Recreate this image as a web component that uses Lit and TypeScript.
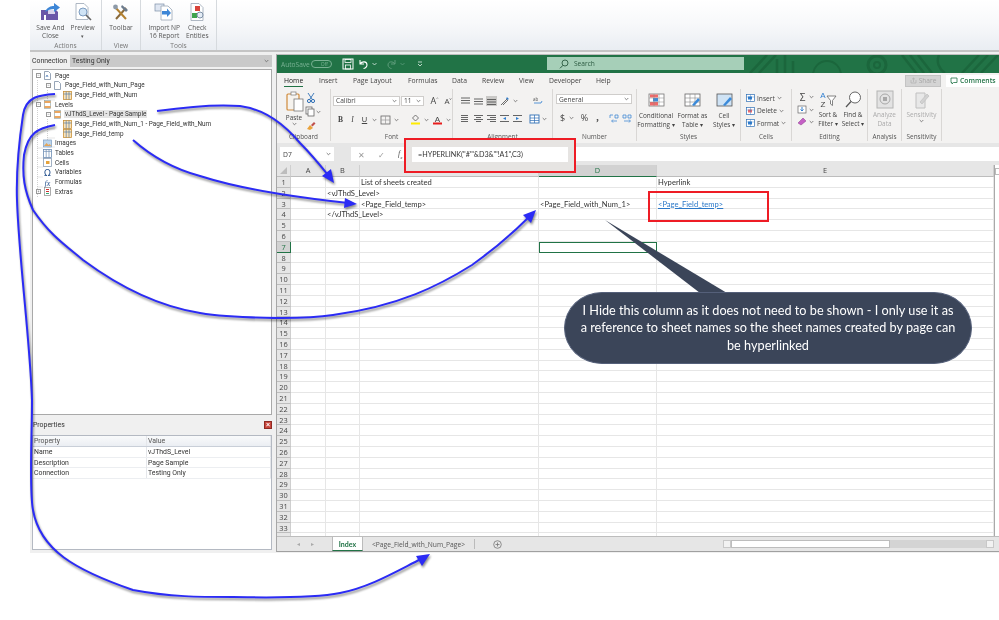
import { LitElement, html, css, svg } from "lit";
import { customElement } from "lit/decorators.js";

const ic = (w: number, h: number, body: unknown) =>
  html`<svg class="ico" width=${w} height=${h} viewBox="0 0 ${w} ${h}">${body}</svg>`;
const caret = () => html`<svg class="caret" width="5" height="4" viewBox="0 0 5 4"><path d="M.7 1l1.8 1.8L4.3 1" fill="none" stroke="#666" stroke-width=".8"/></svg>`;

const tableIc = svg`<rect x=".5" y=".5" width="8" height="8" fill="#fbe3b8" stroke="#c9913a" stroke-width=".8"/><path d="M.5 3h8M3.2 .5v8M6 .5v8" stroke="#5a7fa8" stroke-width=".7"/>`;
const docIc = svg`<path d="M1.5 .5h4l2 2v6h-6z" fill="#fff" stroke="#7d8fa6" stroke-width=".8"/>`;
const levelIc = svg`<rect x="1.5" y=".5" width="6" height="8" fill="#fff" stroke="#9aa" stroke-width=".7"/><path d="M1.5 2h6M1.5 7h6" stroke="#e58a2e" stroke-width="1.6"/>`;
const treeIcons: Record<string, unknown> = {
  page: svg`${docIc}<path d="M3 6l1-2 1 2" stroke="#3a6fb0" stroke-width=".7" fill="none"/>`,
  doc: docIc,
  table: tableIc,
  level: levelIc,
  image: svg`<rect x=".5" y="1" width="8" height="7" fill="#bcd6ee" stroke="#7d9cc0" stroke-width=".7"/><path d="M1 7l2.5-3 2 2 1-1 2 2z" fill="#e3a55a"/>`,
  tables: svg`<rect x=".5" y=".5" width="8" height="8" fill="#fff" stroke="#6d8db3" stroke-width=".8"/><path d="M3.2 .5v8M6 .5v8M.5 2.4h8" stroke="#6d8db3" stroke-width=".7"/>`,
  cells: svg`<rect x=".5" y=".5" width="8" height="8" fill="#fff" stroke="#8a9db5" stroke-width=".8"/><rect x="3" y="3" width="3.5" height="3" fill="#e5a33c"/>`,
  omega: svg`<text x="4.5" y="8" text-anchor="middle" font-size="9" font-family="DejaVu Sans" fill="#27538f">Ω</text>`,
  fx: svg`<text x="4.5" y="7.5" text-anchor="middle" font-size="8" font-style="italic" font-family="Liberation Serif" fill="#27538f">fx</text>`,
  extras: svg`<rect x="1.5" y=".5" width="6" height="8" fill="#fff" stroke="#888" stroke-width=".7"/><path d="M3 2.5h3M3 4.5h3" stroke="#c33" stroke-width="1"/><path d="M3 6.5h3" stroke="#3a7" stroke-width="1"/>`,
};

const tree = [
  { d: 0, e: "-", i: "page", t: "Page" },
  { d: 1, e: "-", i: "doc", t: "Page_Field_with_Num_Page" },
  { d: 2, e: "", i: "table", t: "Page_Field_with_Num" },
  { d: 0, e: "-", i: "level", t: "Levels" },
  { d: 1, e: "-", i: "level", t: "vJThdS_Level - Page Sample", sel: true },
  { d: 2, e: "", i: "table", t: "Page_Field_with_Num_1 - Page_Field_with_Num" },
  { d: 2, e: "", i: "table", t: "Page_Field_temp" },
  { d: 0, e: "", i: "image", t: "Images" },
  { d: 0, e: "", i: "tables", t: "Tables" },
  { d: 0, e: "", i: "cells", t: "Cells" },
  { d: 0, e: "", i: "omega", t: "Variables" },
  { d: 0, e: "", i: "fx", t: "Formulas" },
  { d: 0, e: "+", i: "extras", t: "Extras" },
];

const props = [
  ["Name", "vJThdS_Level"],
  ["Description", "Page Sample"],
  ["Connection", "Testing Only"],
];

const cols = ["A", "B", "C", "D", "E"];
const cells: Record<string, unknown> = {
  "1C": "List of sheets created",
  "1E": "Hyperlink",
  "2B": "<vJThdS_Level>",
  "3C": "<Page_Field_temp>",
  "3D": "<Page_Field_with_Num_1>",
  "3E": html`<span class="lnk">&lt;Page_Field_temp&gt;</span>`,
  "4B": "</vJThdS_Level>",
};

const tabs = ["Home", "Insert", "Page Layout", "Formulas", "Data", "Review", "View", "Developer", "Help"];
const tabW = [35, 34, 55, 44, 30, 37, 30, 47, 30];

const lines = (ys: number[], x1: number, x2: number, color = "#555") =>
  svg`${ys.map((y) => svg`<path d="M${x1} ${y}H${x2}" stroke=${color} stroke-width=".9"/>`)}`;

const alignRow1 = [
  ic(11, 10, lines([2, 4.5, 7], 1, 10)),
  ic(11, 10, lines([3, 5.5, 8], 1, 10)),
  ic(11, 10, lines([3.5, 6, 8.5], 1, 10)),
];
const alignRow2 = [
  ic(11, 10, lines([1.5, 3.5, 5.5, 7.5], 1, 8)),
  ic(11, 10, svg`${lines([1.5, 5.5], 1, 10)}${lines([3.5, 7.5], 3, 8)}`),
  ic(11, 10, svg`${lines([1.5, 5.5], 1, 10)}${lines([3.5, 7.5], 4, 10)}`),
  ic(11, 10, svg`${lines([1.5, 7.5], 1, 10)}<path d="M7 3l-3 1.5 3 1.5z" fill="#2f7ed0"/>`),
  ic(11, 10, svg`${lines([1.5, 7.5], 1, 10)}<path d="M4 3l3 1.5-3 1.5z" fill="#2f7ed0"/>`),
];

@customElement("app-root")
export class AppRoot extends LitElement {
  static styles = css`
    :host { display: block; width: 999px; height: 620px; background: #fff; overflow: hidden; font-family: "Open Sans", sans-serif; color: #444; }
    .page { position: relative; width: 999px; height: 620px; filter: blur(.4px); }
    .ico { display: block; flex: none; }
    .caret { flex: none; }
    .top { height: 50px; margin-left: 30px; display: flex; background: linear-gradient(#fff, #f7f8fa 50%, #e9edf2); border-bottom: 2px solid #c4c4c4; }
    .rgroup { display: flex; flex-direction: column; align-items: center; border-right: 1px solid #d6dade; padding-top: 3px; height: 47px; }
    .w71 { width: 71px; } .w38 { width: 38px; } .w75 { width: 75px; }
    .ritems { display: flex; flex: 1; justify-content: center; gap: 6px; }
    .ritem { display: flex; flex-direction: column; align-items: center; font-size: 6.6px; line-height: 8px; text-align: center; color: #555; white-space: nowrap; }
    .ritem .ico { margin-bottom: 3px; height: 18px; }
    .rlabel { font-size: 6.6px; line-height: 9px; color: #777; }
    .main { display: flex; height: 501px; margin-left: 30px; background: #f0f0f0; }
    .left { width: 245px; flex: none; padding: 3px 2px 0; box-sizing: border-box; display: flex; flex-direction: column; font-family: "Roboto", sans-serif; }
    .conn { display: flex; align-items: center; height: 12px; font-size: 6.9px; color: #333; gap: 3px; flex: none; }
    .connv { flex: 1; height: 12px; background: #c9c9c9; display: flex; align-items: center; justify-content: space-between; padding: 0 3px 0 2px; margin-right: 1px; }
    .tree { position: relative; height: 346px; margin-top: 2px; background: #fff; border: 1px solid #a9a9a9; box-sizing: border-box; padding-top: 1px; flex: none; margin-right: 1px; }
    .guides { position: absolute; left: 0; top: 0; }
    .node { position: relative; display: flex; align-items: center; height: 9.67px; font-size: 6.4px; color: #333; white-space: nowrap; }
    .exp { width: 10px; flex: none; display: flex; justify-content: center; }
    .box { width: 5px; height: 5px; border: .7px solid #999; box-sizing: border-box; background: #fff; display: block; }
    .ttext { margin-left: 2px; padding: 0 1px; }
    .sel { background: #e4e4e4; }
    .phead { height: 20px; display: flex; align-items: center; justify-content: space-between; font-size: 6.9px; color: #333; padding: 0 1px 0 1px; flex: none; }
    .closex { width: 8px; height: 8px; background: #c9463c; border: .6px solid #8e2b24; box-sizing: border-box; color: #fff; font: bold 7px/6px "Liberation Sans", sans-serif; text-align: center; }
    .ptable { flex: none; height: 115px; background: #fff; border: 1px solid #b4b9c2; box-sizing: border-box; margin-right: 1px; font-size: 6.9px; color: #333; }
    .prow { display: grid; grid-template-columns: 114px 1fr; height: 10.8px; line-height: 10px; border-bottom: 1px solid #eceef1; box-sizing: border-box; }
    .prow > span { padding-left: 1px; border-right: 1px solid #e4e6ea; }
    .prow.hd { background: linear-gradient(#f9fafb, #ebeef3); border-bottom: 1px solid #c9cfd8; color: #555; }
    .xl { width: 723px; flex: none; margin-top: 2px; height: 498px; border-top: 1px solid #bdbdbd; border-left: 1px solid #a7a7a7; border-bottom: 1px solid #a0a0a0; box-sizing: border-box; background: #f3f2f1; display: flex; flex-direction: column; margin-left: 1px; }
    .title { position: relative; height: 18px; background: #217346; display: flex; align-items: center; flex: none; color: #fff; overflow: hidden; }
    .autosave { margin-left: 4px; font-size: 6.6px; color: #79b193; width: 30px; }
    .toggle { width: 21px; height: 8px; border: .8px solid #79b193; border-radius: 5px; box-sizing: border-box; font-size: 5px; line-height: 6px; color: #79b193; text-align: right; padding-right: 3px; }
    .qa { display: flex; align-items: center; margin-left: 10px; gap: 3px; }
    .search { position: absolute; left: 270px; top: 2px; width: 197px; height: 13px; background: #a6cfb8; display: flex; align-items: center; color: #2c5a41; font-size: 6.6px; padding-left: 12px; gap: 5px; box-sizing: border-box; }
    .deco { position: absolute; left: 470px; top: 0; }
    .tabs { height: 15px; flex: none; display: flex; align-items: center; font-size: 6.8px; color: #444; padding-left: 7px; }
    .tab { height: 15px; line-height: 15px; white-space: nowrap; flex: none; box-sizing: border-box; }
    .tab.on { color: #222; }
    .tab.on span { display: inline-block; height: 13px; border-bottom: 1.4px solid #217346; line-height: 15px; }
    .spacer { flex: 1; }
    .share { width: 36px; height: 12px; background: #d4d4d4; border: 1px solid #c4c4c4; box-sizing: border-box; color: #a5a5a5; font-size: 6.6px; display: flex; align-items: center; justify-content: center; gap: 2px; margin-right: 5px; }
    .comments { width: 53px; height: 12px; background: #fff; color: #217346; font-size: 6.8px; font-weight: 600; display: flex; align-items: center; padding-left: 4px; gap: 2px; box-sizing: border-box; }
    .xrib { height: 55px; flex: none; display: flex; }
    .xg { display: flex; flex-direction: column; height: 52px; margin-top: 1px; border-right: 1px solid #d9d7d5; box-sizing: border-box; flex: none; }
    .xbody { flex: 1; display: flex; min-height: 0; }
    .xlabel { height: 9px; font-size: 6.4px; line-height: 9px; text-align: center; color: #555; flex: none; }
    .tall { display: flex; flex-direction: column; align-items: center; font-size: 6.4px; line-height: 9px; text-align: center; color: #444; white-space: nowrap; flex: none; }
    .tall .ico { margin-bottom: 1px; }
    .dim { color: #ababab; }
    .col { display: flex; flex-direction: column; }
    .rw { display: flex; align-items: center; gap: 1px; }
    .sele { background: #fff; border: 1px solid #cfcdcb; box-sizing: border-box; height: 10px; font-size: 6.6px; display: flex; align-items: center; justify-content: space-between; padding: 0 2px; color: #444; }
    .glyph { font-size: 7.5px; color: #444; width: 9px; text-align: center; flex: none; }
    .bold { font-weight: 700; font-family: "Liberation Serif", serif; }
    .ital { font-style: italic; font-family: "Liberation Serif", serif; }
    .und { text-decoration: underline; font-family: "Liberation Sans", sans-serif; }
    .selbg { background: #c9c8c6; }
    .fstrip { height: 4px; flex: none; background: #e6e6e6; }
    .fbar { height: 14px; flex: none; background: #e6e6e6; display: flex; align-items: center; }
    .namebox { width: 54px; height: 14px; margin-left: 3px; background: #fff; font-size: 6.8px; display: flex; align-items: center; justify-content: space-between; padding: 0 3px; box-sizing: border-box; flex: none; }
    .fbtns { width: 17px; flex: none; }
    .fbtnrow { height: 14px; display: flex; align-items: center; background: #fff; flex: 1; padding-left: 7px; gap: 13px; color: #999; font-size: 8px; }
    .grid { height: 371px; flex: none; display: flex; overflow: hidden; background: #fff; }
    .sheet { display: grid; grid-template-columns: 14px 35px 34px 179px 118px 337px; grid-template-rows: 12px; grid-auto-rows: 10.8px; font: 7.6px "Lato", sans-serif; color: #333; flex: none; }
    .hc { background: #e6e6e6; border-right: 1px solid #cfcfcf; border-bottom: 1px solid #bdbdbd; box-sizing: border-box; text-align: center; line-height: 11px; font: 7.4px/11px "Open Sans", sans-serif; color: #444; }
    .hc.on { background: #d2d2d2; border-bottom: 1px solid #217346; color: #217346; }
    .rh.on { background: #d2d2d2; border-right: 1px solid #217346; color: #217346; }
    .rh { line-height: 10px; }
    .c { border-right: 1px solid #e6e6e6; border-bottom: 1px solid #e6e6e6; box-sizing: border-box; white-space: nowrap; line-height: 10px; padding-left: 1px; overflow: visible; min-width: 0; }
    .c.cur { border: 1px solid #217346; }
    .lnk { color: #2b78c8; text-decoration: underline; }
    .vscroll { flex: 1; border-left: 1px solid #a9a9a9; background: #fff; }
    .vup { width: 5px; height: 7px; margin-top: 3px; border: .6px solid #bbb; box-sizing: border-box; }
    .sheets { flex: 1; display: flex; align-items: stretch; background: #e6e6e6; border-top: 1px solid #bdbdbd; font-size: 6.7px; min-height: 0; }
    .nav { width: 55px; display: flex; align-items: center; justify-content: center; gap: 11px; color: #aaa; padding-left: 1px; flex: none; box-sizing: border-box; font-size: 6px; }
    .st { display: flex; align-items: center; justify-content: center; box-sizing: border-box; flex: none; white-space: nowrap; }
    .st.idx { width: 31px; background: #fff; color: #217346; font: bold 7px "Lato", sans-serif; border-bottom: 1.4px solid #217346; border-left: 1px solid #bbb; border-right: 1px solid #bbb; }
    .st.other { width: 112px; color: #555; border-right: 1px solid #bbb; margin: 2px 0; }
    .plus { margin-left: 18px; align-self: center; flex: none; }
    .hs { margin-left: 221px; align-self: center; display: flex; height: 7.5px; width: 271px; flex: none; background: #d4d4d4; }
    .hsb { width: 8px; background: #f2f2f2; border: .6px solid #c8c8c8; box-sizing: border-box; flex: none; }
    .hst { width: 159px; background: #fff; border: .6px solid #bdbdbd; box-sizing: border-box; flex: none; }
    .hsf { flex: 1; }
    .overlay { position: absolute; left: 0; top: 0; pointer-events: none; }
    .arrows { filter: drop-shadow(1px 2px 1px rgba(0,0,0,.45)); }
    .red { position: absolute; border: 2px solid #ee1c25; box-sizing: border-box; }
    .r1 { left: 404px; top: 138px; width: 172px; height: 35px; background: #e6e4e2; padding: 7px 6px 0 6px; }
    .rinput { height: 15px; background: #fff; font: 7.2px/15px "Lato", sans-serif; padding-left: 6px; color: #333; white-space: nowrap; }
    .r2 { left: 648px; top: 191px; width: 121px; height: 31px; }
    .tail { position: absolute; left: 600px; top: 218px; }
    .pill { position: absolute; left: 564px; top: 292px; width: 408px; height: 72px; box-sizing: border-box; background: #3b4559; border: 1px solid #55607a; border-radius: 38px / 36px; color: #fff; font: 12.7px/17.3px "Lato", sans-serif; display: flex; align-items: center; justify-content: center; text-align: center; white-space: nowrap; }
  `;

  private grp(label: string, w: number, body: unknown) {
    return html`<div class="xg" style="width:${w}px"><div class="xbody">${body}</div><div class="xlabel">${label}</div></div>`;
  }

  private ribbon() {
    const clipboard = html`
      <div class="tall" style="margin:2px 0 0 7px">
        ${ic(20, 21, svg`<rect x="3" y="3" width="12" height="16" rx="1" fill="#f6f3ee" stroke="#d08a3a" stroke-width="1.2"/><rect x="7" y="1" width="5" height="3" fill="#fff" stroke="#777" stroke-width=".7"/><rect x="10" y="8" width="9" height="12" fill="#fff" stroke="#777" stroke-width=".8"/>`)}
        <span>Paste</span>${caret()}
      </div>
      <div class="col" style="margin:3px 0 0 1px;gap:3px">
        ${ic(12, 11, svg`<path d="M3 1l4 6M9 1L5 7" stroke="#2f6fb5" stroke-width=".9"/><circle cx="4" cy="9" r="1.6" fill="none" stroke="#2f6fb5"/><circle cx="8" cy="9" r="1.6" fill="none" stroke="#2f6fb5"/>`)}
        <div class="rw">${ic(10, 11, svg`<rect x="1" y="1" width="6" height="7" fill="#fff" stroke="#666" stroke-width=".8"/><rect x="3" y="3" width="6" height="7" fill="#fff" stroke="#666" stroke-width=".8"/>`)}${caret()}</div>
        ${ic(12, 11, svg`<path d="M2 9l3-4 3 3-3 2z" fill="#e9a23b"/><path d="M6 5l3-3 1.5 1.5-3 3z" fill="#c0504d"/>`)}
      </div>`;

    const font = html`
      <div class="col" style="width:100%;padding:5px 0 0 2px;gap:7px">
        <div class="rw" style="gap:1px">
          <div class="sele" style="width:67px"><span>Calibri</span>${caret()}</div>
          <div class="sele" style="width:23px"><span>11</span>${caret()}</div>
          <span class="glyph" style="font-size:9px;margin-left:3px;width:13px">A<sup style="font-size:4px">^</sup></span>
          <span class="glyph" style="font-size:8px;width:12px">A<sup style="font-size:4px">v</sup></span>
        </div>
        <div class="rw" style="padding-left:3px;gap:3px">
          <span class="glyph bold">B</span><span class="glyph ital">I</span><span class="glyph und">U</span>${caret()}
          ${ic(11, 10, svg`<rect x="1" y="1" width="9" height="8" fill="none" stroke="#666" stroke-width=".8"/><path d="M5.5 1v8M1 5h9" stroke="#999" stroke-width=".7"/>`)}${caret()}
          <span style="width:5px"></span>
          ${ic(11, 11, svg`<path d="M5.5 1l3 3-3 3-3-3z" fill="none" stroke="#555" stroke-width=".8"/><rect x="1" y="8.5" width="9" height="2" fill="#ffeb00"/>`)}${caret()}
          ${ic(11, 11, svg`<text x="5.5" y="7.5" text-anchor="middle" font-size="8" font-family="Liberation Sans" fill="#444">A</text><rect x="1" y="8.5" width="9" height="2" fill="#e81c1c"/>`)}${caret()}
        </div>
      </div>`;

    const align = html`
      <div class="col" style="padding:7px 0 0 7px;gap:8px">
        <div class="rw" style="gap:2px">
          ${alignRow1.slice(0, 2)}<span class="selbg">${alignRow1[2]}</span>
          ${ic(12, 10, svg`<path d="M2 9l7-7M4 9l5-5" stroke="#5b5b5b" stroke-width=".9"/><path d="M9 2l-2 .3M9 2l-.3 2" stroke="#2f7ed0"/>`)}${caret()}
          <span style="width:10px"></span>
          ${ic(12, 10, svg`<text x="1" y="4.5" font-size="4.5" fill="#555">ab</text><path d="M2 7h7l1-2" fill="none" stroke="#2f7ed0" stroke-width=".8"/>`)}
        </div>
        <div class="rw" style="gap:2px">
          ${alignRow2}
          <span style="width:2px"></span>
          ${ic(11, 10, svg`<rect x="1" y="1" width="9" height="8" fill="#fff" stroke="#2f6fb5" stroke-width=".9"/><path d="M1 4h9M1 6.5h9M5.5 1v8" stroke="#2f6fb5" stroke-width=".7"/>`)}${caret()}
        </div>
      </div>`;

    const number = html`
      <div class="col" style="padding:5px 0 0 3px;gap:7px">
        <div class="sele" style="width:76px"><span>General</span>${caret()}</div>
        <div class="rw" style="padding-left:2px;gap:2px">
          <span class="glyph" style="font-size:9px">$</span>${caret()}
          <span class="glyph" style="font-size:9px;width:13px;margin-left:2px">%</span>
          <span class="glyph bold" style="font-size:10px">,</span>
          <span style="width:3px"></span>
          ${ic(11, 10, svg`<path d="M1 2h3M1 2v3M6 2h3v3H6zM3 8h5M4 6.5L2.5 8 4 9.5" fill="none" stroke="#2f7ed0" stroke-width=".7"/>`)}
          ${ic(11, 10, svg`<path d="M1 2h3v3H1zM6 2h3v3H6zM2 8h6M7 6.5L8.5 8 7 9.5" fill="none" stroke="#2f7ed0" stroke-width=".7"/>`)}
        </div>
      </div>`;

    const styleTable = svg`<rect x="1" y="2" width="15" height="12" fill="#fff" stroke="#666" stroke-width=".8"/><path d="M1 6h15M1 10h15M6 2v12M11 2v12" stroke="#888" stroke-width=".6"/>`;
    const styles = html`
      <div class="rw" style="align-items:flex-start;padding:3px 0 0 1px;gap:2px">
        <div class="tall" style="width:36px">
          ${ic(17, 15, svg`<rect x="1" y="2" width="15" height="12" fill="#fff" stroke="#777" stroke-width=".8"/><rect x="2" y="2.5" width="8" height="3" fill="#ef6a6a"/><rect x="5" y="6" width="5" height="3.5" fill="#3b8ad9"/><rect x="2" y="10" width="8" height="3.5" fill="#ef6a6a"/><path d="M1 6h15M1 10h15M6 2v12M11 2v12" stroke="#888" stroke-width=".5"/>`)}
          <span style="margin-top:3px">Conditional<br />Formatting ▾</span>
        </div>
        <div class="tall" style="width:31px;margin-left:1px">
          ${ic(17, 15, svg`${styleTable}<path d="M8 13l6-7 2 2-6 6z" fill="#3b8ad9"/>`)}
          <span style="margin-top:3px">Format as<br />Table ▾</span>
        </div>
        <div class="tall" style="width:26px;margin-left:1px">
          ${ic(17, 15, svg`<rect x="1" y="2" width="15" height="12" fill="#cfe3f5" stroke="#555" stroke-width=".8"/><path d="M7 13l7-8 2 2-7 7z" fill="#3b8ad9"/>`)}
          <span style="margin-top:3px">Cell<br />Styles ▾</span>
        </div>
      </div>`;

    const cellItem = (t: string, color: string) => html`
      <div class="rw" style="height:12.5px;font-size:6.6px;gap:2px">
        ${ic(9, 8, svg`<rect x=".5" y=".5" width="8" height="7" fill="#fff" stroke="#2f6fb5" stroke-width=".7"/><rect x="2" y="2.5" width="4" height="3" fill=${color}/><path d="M.5 3h8M4.5 .5v7" stroke="#2f6fb5" stroke-width=".4"/>`)}
        <span>${t}</span>${caret()}
      </div>`;
    const cellsG = html`<div class="col" style="padding:3px 0 0 5px">${cellItem("Insert", "#2f7ed0")}${cellItem("Delete", "#ef6a6a")}${cellItem("Format", "#2f7ed0")}</div>`;

    const editing = html`
      <div class="col" style="padding:3px 0 0 5px;gap:3px;flex:none">
        <div class="rw"><span class="glyph" style="font-size:10px;width:11px;line-height:10px">Σ</span>${caret()}</div>
        <div class="rw">${ic(11, 9, svg`<rect x="1" y="1" width="8" height="7" fill="#fff" stroke="#666" stroke-width=".7"/><path d="M5 2v4M3.5 4.5L5 6l1.5-1.5" stroke="#2f7ed0" fill="none"/>`)}${caret()}</div>
        <div class="rw">${ic(11, 9, svg`<path d="M1 6l5-5 3 3-5 4z" fill="#c55fc5" stroke="#8a3d8a" stroke-width=".5"/>`)}${caret()}</div>
      </div>
      <div class="tall" style="width:24px;margin:1px 0 0 2px">
        ${ic(20, 19, svg`<text x="5" y="8" font-size="8" text-anchor="middle" font-family="Liberation Sans" fill="#2f7ed0">A</text><text x="5" y="17" font-size="8" text-anchor="middle" font-family="Liberation Sans" fill="#444">Z</text><path d="M9 6h9l-3.5 4.5v5l-2-1.5v-3.5z" fill="#fff" stroke="#666" stroke-width=".8"/>`)}
        <span>Sort &amp;<br />Filter ▾</span>
      </div>
      <div class="tall" style="width:24px;margin:1px 0 0 1px">
        ${ic(20, 19, svg`<circle cx="12" cy="7.5" r="5.5" fill="#fff" stroke="#555" stroke-width=".9"/><path d="M8 11.5L3 17" stroke="#555" stroke-width="1.2"/>`)}
        <span>Find &amp;<br />Select ▾</span>
      </div>`;

    const analysis = html`
      <div class="tall dim" style="width:33px;padding-top:1px">
        ${ic(18, 19, svg`<rect x="1" y="1" width="16" height="17" fill="#e3e3e3" stroke="#b4b4b4"/><circle cx="9" cy="9" r="5" fill="none" stroke="#a8a8a8"/><rect x="7" y="7" width="4" height="4" fill="#a8a8a8"/>`)}
        <span>Analyze<br />Data</span>
      </div>`;
    const sens = html`
      <div class="tall dim" style="width:39px;padding-top:1px">
        ${ic(18, 19, svg`<path d="M3 3h9v15H3z" fill="#e8e8e8" stroke="#c0c0c0"/><path d="M7 12l7-8 2 2-7 8z" fill="#d2d2d2" stroke="#bbb" stroke-width=".6"/>`)}
        <span>Sensitivity</span>${caret()}
      </div>`;

    return html`<div class="xrib">
      ${this.grp("Clipboard", 54, clipboard)}
      ${this.grp("Font", 122, font)}
      ${this.grp("Alignment", 100, align)}
      ${this.grp("Number", 84, number)}
      ${this.grp("Styles", 104, styles)}
      ${this.grp("Cells", 51, cellsG)}
      ${this.grp("Editing", 76, editing)}
      ${this.grp("Analysis", 34, analysis)}
      ${this.grp("Sensitivity", 40, sens)}
    </div>`;
  }

  private sheet() {
    const rows = [];
    for (let r = 1; r <= 34; r++) {
      rows.push(html`<div class="hc rh ${r === 7 ? "on" : ""}">${r < 34 ? r : ""}</div>`);
      for (const c of cols) {
        const cur = r === 7 && c === "D";
        rows.push(html`<div class="c ${cur ? "cur" : ""}">${cells[r + c] ?? ""}</div>`);
      }
    }
    return html`<div class="sheet">
      <div class="hc">${ic(12, 10, svg`<path d="M10 2v7H3z" fill="#bdbdbd"/>`)}</div>
      ${cols.map((c) => html`<div class="hc ${c === "D" ? "on" : ""}">${c}</div>`)}
      ${rows}
    </div>`;
  }

  render() {
    return html`<div class="page">
      <div class="top">
        <div class="rgroup w71">
          <div class="ritems">
            <div class="ritem">${ic(22, 18, svg`<path d="M2 7h15l2 2v8H2z" fill="#6a55a8"/><rect x="5" y="12" width="2" height="5" fill="#fff"/><rect x="9" y="7" width="7" height="4" fill="#d9d4ec"/><path d="M6 9c2-5 6-6 9-6V0l6 4.5L15 9V6c-3 0-6 1-9 3z" fill="#3d86d6"/>`)}<span>Save And<br />Close</span></div>
            <div class="ritem">${ic(20, 18, svg`<path d="M3 .5h8l4 4v12H3z" fill="#fff" stroke="#9aa6b5" stroke-width=".8"/><circle cx="10" cy="9" r="4" fill="#cfe3f5" stroke="#7d9cc0"/><path d="M13 12l5 5" stroke="#666" stroke-width="1.6"/>`)}<span>Preview<br /><span style="font-size:5px">▾</span></span></div>
          </div>
          <div class="rlabel">Actions</div>
        </div>
        <div class="rgroup w38">
          <div class="ritems">
            <div class="ritem">${ic(18, 18, svg`<path d="M4 16L14 5" stroke="#8a6a3a" stroke-width="2"/><path d="M10 2l6 5-2 2-5-5z" fill="#6d7c8d"/><path d="M3 4l11 12" stroke="#b3812f" stroke-width="2"/><circle cx="3.5" cy="4" r="2.4" fill="#8d9aa8"/>`)}<span>Toolbar</span></div>
          </div>
          <div class="rlabel">View</div>
        </div>
        <div class="rgroup w75">
          <div class="ritems" style="gap:6px">
            <div class="ritem">${ic(20, 18, svg`<rect x="1" y="1" width="9" height="7" fill="#dfe6f2" stroke="#7d8fa6" stroke-width=".7"/><path d="M7 3h7l4 4v10H7z" fill="#fff" stroke="#9aa6b5" stroke-width=".8"/><path d="M8 8h5V5.5l4 4.5-4 4v-2.500H8z" fill="#3d86d6"/>`)}<span>Import NP<br />16 Report</span></div>
            <div class="ritem">${ic(18, 18, svg`<path d="M3 .5h8l4 4v13H3z" fill="#fff" stroke="#9aa6b5" stroke-width=".8"/><rect x="7" y="3" width="5" height="5" fill="#d9443a"/><rect x="4" y="10" width="5" height="5" fill="#3fa34d"/><circle cx="12" cy="12" r="3" fill="#e4ecf5" stroke="#7d8fa6"/>`)}<span>Check<br />Entities</span></div>
          </div>
          <div class="rlabel">Tools</div>
        </div>
      </div>

      <div class="main">
        <div class="left">
          <div class="conn"><span>Connection</span><div class="connv"><span>Testing Only</span>${caret()}</div></div>
          <div class="tree">
            <svg class="guides" width="120" height="140"><path d="M4.500 10v118M14.500 20v10h8M14.500 49v28h8M14.500 59h8M14.500 68h8M4.500 78h5M4.500 88h5M4.500 97h5M4.500 107h5M4.500 117h5" stroke="#bbb" stroke-width=".7" stroke-dasharray="1 1" fill="none"/></svg>
            ${tree.map((n) => html`
              <div class="node" style="padding-left:${n.d * 10}px">
                <span class="exp">${n.e ? html`<svg class="box" viewBox="0 0 5 5"><path d=${n.e === "-" ? "M1 2.200h3" : "M1 2.200h3M2.500 1v3"} stroke="#555" stroke-width=".6"/></svg>` : ""}</span>
                ${ic(9, 9, treeIcons[n.i])}
                <span class="ttext ${n.sel ? "sel" : ""}">${n.t}</span>
              </div>`)}
          </div>
          <div class="phead"><span>Properties</span><span class="closex">×</span></div>
          <div class="ptable">
            <div class="prow hd"><span>Property</span><span>Value</span></div>
            ${props.map((p) => html`<div class="prow"><span>${p[0]}</span><span>${p[1]}</span></div>`)}
          </div>
        </div>

        <div class="xl">
          <div class="title">
            <span class="autosave">AutoSave</span>
            <span class="toggle">Off</span>
            <div class="qa">
              ${ic(12, 12, svg`<rect x="1" y="1" width="10" height="10" fill="none" stroke="#fff" stroke-width="1"/><rect x="3" y="1.500" width="6" height="3" fill="none" stroke="#fff" stroke-width=".8"/><rect x="3.500" y="7" width="5" height="4" fill="none" stroke="#fff" stroke-width=".8"/>`)}
              ${ic(12, 12, svg`<path d="M3 2v4h4M3 6c2-3 7-3 7 1 0 2-2 3.500-3.500 3.500" fill="none" stroke="#fff" stroke-width="1.100"/>`)}
              ${ic(5, 4, svg`<path d="M.5 1l2 2 2-2" fill="none" stroke="#dfeee6" stroke-width=".8"/>`)}
              <span style="width:3px"></span>
              ${ic(11, 12, svg`<path d="M9 2v4H5M9 6C7 3 2 3 2 7c0 2 2 3.500 3.500 3.500" fill="none" stroke="#5e9c7b" stroke-width="1"/>`)}
              ${ic(5, 4, svg`<path d="M.5 1l2 2 2-2" fill="none" stroke="#5e9c7b" stroke-width=".8"/>`)}
              <span style="width:6px"></span>
              ${ic(6, 6, svg`<path d="M1 1h4M1 3l2 2 2-2" fill="none" stroke="#dfeee6" stroke-width=".8"/>`)}
            </div>
            <div class="search">
              ${ic(10, 10, svg`<circle cx="6" cy="4" r="3" fill="none" stroke="#2c5a41" stroke-width=".9"/><path d="M4 6.300L1 9.300" stroke="#2c5a41" stroke-width="1"/>`)}
              <span>Search</span>
            </div>
            <svg class="deco" width="252" height="18" viewBox="0 0 252 18" fill="none" stroke="#1b663c">
              <path d="M3 18L20 0M12 18L29 0M30 18V4M38 18V0M46 18V6" stroke-width="2.5"/>
              <circle cx="130" cy="10" r="9" stroke-width="3"/><circle cx="130" cy="10" r="3" stroke-width="2"/>
              <path d="M155 0l14 18M163 0l14 18M171 0l14 18M192 0c-3 7 0 14 6 18M215 18L232 0M224 18L241 0M234 18L251 0" stroke-width="2.5"/>
              <circle cx="80" cy="20" r="14" stroke-width="2"/>
            </svg>
          </div>

          <div class="tabs">
            ${tabs.map((t, i) => html`<div class="tab ${i === 0 ? "on" : ""}" style="width:${tabW[i]}px"><span>${t}</span></div>`)}
            <div class="spacer"></div>
            <div class="share">${ic(7, 7, svg`<path d="M1 3v3h5V3M3.500 5V1M2 2.300L3.500 1 5 2.300" fill="none" stroke="#b0b0b0" stroke-width=".7"/>`)}<span>Share</span></div>
            <div class="comments">${ic(8, 8, svg`<path d="M1 1h6v4.500H3.500L2 7V5.500H1z" fill="none" stroke="#217346" stroke-width=".8"/>`)}<span>Comments</span></div>
          </div>

          ${this.ribbon()}

          <div class="fstrip"></div>
          <div class="fbar">
            <div class="namebox"><span>D7</span>${caret()}</div>
            <div class="fbtns"></div>
            <div class="fbtnrow"><span>✕</span><span>✓</span><span class="ital" style="color:#555">f<sub style="font-size:5px">x</sub></span></div>
          </div>
          <div class="fstrip"></div>

          <div class="grid">
            ${this.sheet()}
            <div class="vscroll"><div class="vup"></div></div>
          </div>

          <div class="sheets">
            <div class="nav"><span>◂</span><span>▸</span></div>
            <div class="st idx">Index</div>
            <div class="st other">&lt;Page_Field_with_Num_Page&gt;</div>
            <div class="plus">${ic(9, 9, svg`<circle cx="4.500" cy="4.500" r="3.800" fill="none" stroke="#777" stroke-width=".8"/><path d="M2.500 4.500h4M4.500 2.500v4" stroke="#777" stroke-width=".8"/>`)}</div>
            <div class="hs"><div class="hsb"></div><div class="hst"></div><div class="hsf"></div><div class="hsb"></div></div>
          </div>
        </div>
      </div>

      <div class="red r1"><div class="rinput">=HYPERLINK("#'"&amp;D3&amp;"'!A1",C3)</div></div>
      <div class="red r2"></div>

      <svg class="tail" width="130" height="76" viewBox="600 218 130 76"><path d="M605 220L700 293H727z" fill="#3b4559"/></svg>
      <div class="pill"><span>I Hide this column as it does not need to be shown - I only use it as<br />a reference to sheet names so the sheet names created by page can<br />be hyperlinked</span></div>

      <svg class="overlay arrows" width="999" height="620" viewBox="0 0 999 620" fill="none" stroke="#2b2bf5" stroke-width="2">
        <path d="M55 94C40 95 26 96 23 115C20 135 16 170 17 200C19 260 30 340 32 400C32 440 29 490 33 510C40 550 75 570 133 590C170 597 200 597 233 597C280 598 320 597 340 593C370 587 395 572 421 559"/>
        <path d="M430 554L416 556L422 566z" fill="#2b2bf5" stroke="none"/>
        <path d="M55 125C38 128 28 133 24 155C22 175 24 190 33 210C50 235 65 245 83 260C110 280 150 305 200 313C230 318 300 320 333 315C400 306 440 285 472 265C500 245 518 228 530 216"/>
        <path d="M536 210L523 215L531 223z" fill="#2b2bf5" stroke="none"/>
        <path d="M157 111C185 107 215 104 240 106C265 109 285 125 300 143C312 155 320 165 328 175"/>
        <path d="M334 183L322 176L331 169z" fill="#2b2bf5" stroke="none"/>
        <path d="M133 140C150 155 170 168 200 176C225 184 255 190 280 194C305 198 330 201 348 203"/>
        <path d="M357 204L345 198L344 208z" fill="#2b2bf5" stroke="none"/>
      </svg>
    </div>`;
  }
}
